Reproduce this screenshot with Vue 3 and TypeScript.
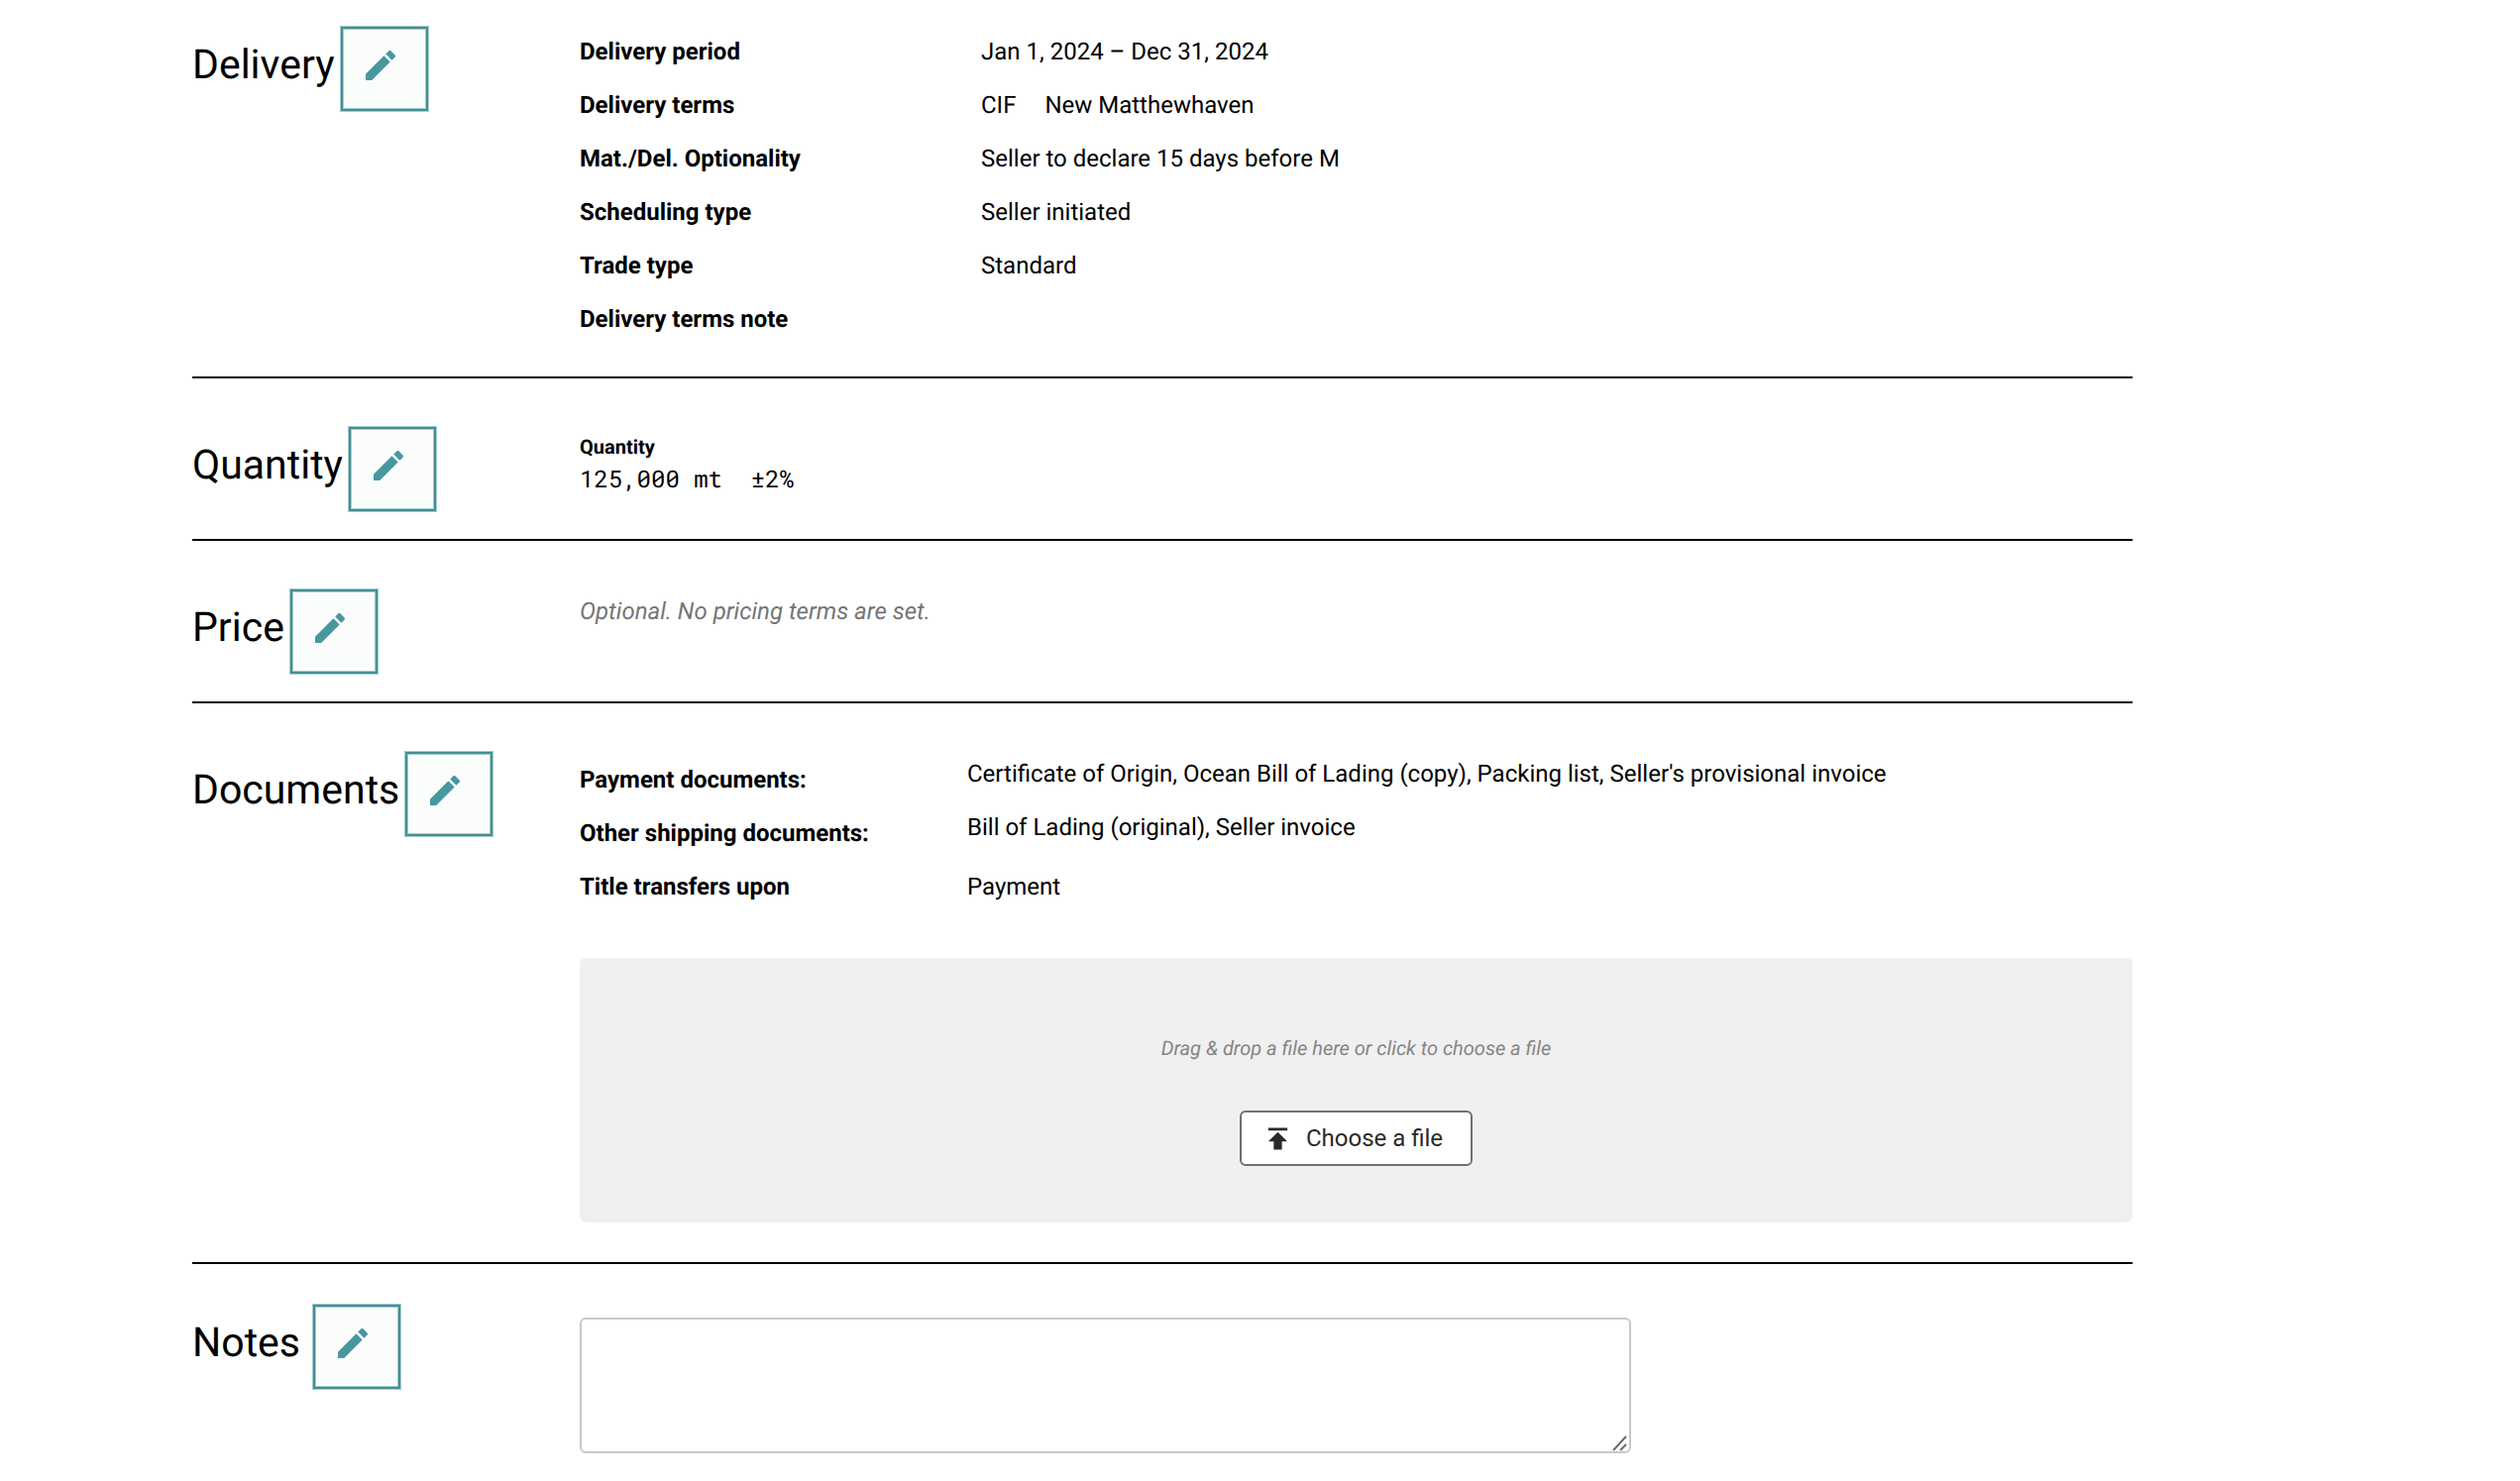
<script setup lang="ts">
import { ref } from 'vue'

interface Term {
  label: string
  value: string
  extra?: string
}

const deliveryTerms: Term[] = [
  { label: 'Delivery period', value: 'Jan 1, 2024 – Dec 31, 2024' },
  { label: 'Delivery terms', value: 'CIF', extra: 'New Matthewhaven' },
  { label: 'Mat./Del. Optionality', value: 'Seller to declare 15 days before M' },
  { label: 'Scheduling type', value: 'Seller initiated' },
  { label: 'Trade type', value: 'Standard' },
  { label: 'Delivery terms note', value: '' },
]

const documentTerms: Term[] = [
  {
    label: 'Payment documents:',
    value: "Certificate of Origin, Ocean Bill of Lading (copy), Packing list, Seller's provisional invoice",
  },
  { label: 'Other shipping documents:', value: 'Bill of Lading (original), Seller invoice' },
]

const editIcon =
  'M3 17.25V21h3.75L17.81 9.94l-3.75-3.75L3 17.25zM20.71 7.04c.39-.39.39-1.02 0-1.41l-2.34-2.34c-.39-.39-1.02-.39-1.41 0l-1.83 1.83 3.75 3.75 1.83-1.83z'

const notes = ref('')
</script>

<template>
  <main class="page">
    <section class="section section-delivery">
      <header class="head">
        <h2 class="title">Delivery</h2>
        <button type="button" class="edit" aria-label="Edit delivery">
          <svg viewBox="0 0 24 24" aria-hidden="true"><path :d="editIcon" /></svg>
        </button>
      </header>
      <dl class="terms">
        <div v-for="term in deliveryTerms" :key="term.label" class="term">
          <dt>{{ term.label }}</dt>
          <dd>
            <span>{{ term.value }}</span>
            <span v-if="term.extra">{{ term.extra }}</span>
          </dd>
        </div>
      </dl>
    </section>

    <section class="section">
      <header class="head">
        <h2 class="title">Quantity</h2>
        <button type="button" class="edit" aria-label="Edit quantity">
          <svg viewBox="0 0 24 24" aria-hidden="true"><path :d="editIcon" /></svg>
        </button>
      </header>
      <dl class="quantity">
        <dt>Quantity</dt>
        <dd>125,000 mt&nbsp; ±2%</dd>
      </dl>
    </section>

    <section class="section">
      <header class="head">
        <h2 class="title">Price</h2>
        <button type="button" class="edit" aria-label="Edit price">
          <svg viewBox="0 0 24 24" aria-hidden="true"><path :d="editIcon" /></svg>
        </button>
      </header>
      <p class="empty">Optional. No pricing terms are set.</p>
    </section>

    <section class="section section-documents">
      <header class="head">
        <h2 class="title">Documents</h2>
        <button type="button" class="edit" aria-label="Edit documents">
          <svg viewBox="0 0 24 24" aria-hidden="true"><path :d="editIcon" /></svg>
        </button>
      </header>
      <div class="documents">
        <dl class="terms terms-documents">
          <div v-for="term in documentTerms" :key="term.label" class="term term-raised">
            <dt>{{ term.label }}</dt>
            <dd>{{ term.value }}</dd>
          </div>
          <div class="term">
            <dt>Title transfers upon</dt>
            <dd>Payment</dd>
          </div>
        </dl>
        <div class="dropzone">
          <p class="hint">Drag &amp; drop a file here or click to choose a file</p>
          <button type="button" class="choose">
            <svg viewBox="0 0 24 24" aria-hidden="true">
              <path d="M5 4v2h14V4H5zm0 10h4v6h6v-6h4l-7-7-7 7z" />
            </svg>
            <span>Choose a file</span>
          </button>
        </div>
      </div>
    </section>

    <section class="section section-notes">
      <header class="head head-notes">
        <h2 class="title"><label for="notes">Notes</label></h2>
        <button type="button" class="edit" aria-label="Edit notes">
          <svg viewBox="0 0 24 24" aria-hidden="true"><path :d="editIcon" /></svg>
        </button>
      </header>
      <div class="notes">
        <textarea id="notes" v-model="notes"></textarea>
        <svg class="grip" viewBox="0 0 16 16" aria-hidden="true">
          <path d="M1 15 14 1M8 15l6-6" />
        </svg>
      </div>
    </section>
  </main>
</template>

<style>
body {
  margin: 0;
  background: #fff;
}
</style>

<style scoped>
.page {
  box-sizing: border-box;
  padding: 0 391px 0 194px;
  font-family: Roboto, 'Liberation Sans', sans-serif;
  font-size: 24px;
  line-height: 30px;
  text-rendering: geometricPrecision;
  color: #000;
}

.section {
  display: grid;
  grid-template-columns: 391px minmax(0, 1fr);
  align-items: start;
  padding: 48px 0 27px;
  border-bottom: 2px solid #000;
}

.section-delivery {
  padding: 26px 0 35px;
}

.section-documents {
  padding-bottom: 40px;
}

.section-notes {
  padding: 40px 0 28px;
  border-bottom: 0;
}

.head {
  display: flex;
  align-items: flex-start;
  gap: 5px;
}

.head-notes {
  gap: 12px;
}

.title {
  margin: 0;
  padding-top: 16px;
  font-size: 41px;
  line-height: 48px;
  font-weight: 400;
  white-space: nowrap;
}

.edit {
  box-sizing: border-box;
  flex: none;
  display: flex;
  align-items: flex-start;
  width: 90px;
  height: 87px;
  padding: 19px 20px;
  border: 1px solid #a4cacc;
  border-radius: 0;
  box-shadow: inset 0 0 0 2px #448f95, inset 0 0 0 3px #a4cacc;
  background: #fbfdfd;
  color: #48979f;
}

.edit svg {
  width: 40px;
  height: 40px;
  fill: currentColor;
}

dl,
dd,
p {
  margin: 0;
}

.terms {
  display: flex;
  flex-direction: column;
  gap: 24px;
  padding-top: 11px;
}

.section-delivery .terms {
  padding-bottom: 8px;
}

.term {
  display: grid;
  grid-template-columns: 405px minmax(0, 1fr);
  min-height: 30px;
}

.term dt {
  font-weight: 700;
}

.term dd {
  display: flex;
  gap: 29px;
}

.terms-documents {
  padding-top: 14px;
}

.terms-documents .term {
  grid-template-columns: 391px minmax(0, 1fr);
}

.term-raised dd {
  margin-top: -6px;
}

.quantity {
  padding-top: 6px;
}

.quantity dt {
  font-size: 20px;
  font-weight: 700;
}

.quantity dd {
  font-family: 'Roboto Mono', 'DejaVu Sans Mono', monospace;
  line-height: 34px;
}

.empty {
  padding-top: 8px;
  font-style: italic;
  color: #757575;
}

.dropzone {
  display: flex;
  flex-direction: column;
  align-items: center;
  gap: 48px;
  margin-top: 57px;
  padding: 76px 24px 57px;
  border-radius: 6px;
  background: #f0f0f0;
}

.hint {
  font-size: 20px;
  font-style: italic;
  color: #858585;
}

.choose {
  box-sizing: border-box;
  display: flex;
  align-items: center;
  gap: 12px;
  height: 56px;
  padding: 0 28px 0 20px;
  border: 2px solid #707070;
  border-radius: 6px;
  background: #fff;
  font: inherit;
  color: #2a2a2a;
}

.choose svg {
  width: 33px;
  height: 33px;
  fill: currentColor;
}

.notes {
  position: relative;
  max-width: 1061px;
  margin-top: 14px;
}

.notes textarea {
  box-sizing: border-box;
  display: block;
  width: 100%;
  height: 137px;
  padding: 12px;
  border: 2px solid #c8c8c8;
  border-radius: 6px;
  background: #fff;
  font: inherit;
  resize: none;
}

.grip {
  position: absolute;
  right: 3px;
  bottom: 2px;
  width: 16px;
  height: 16px;
  fill: none;
  stroke: #6b6b6b;
  stroke-width: 2;
  pointer-events: none;
}
</style>
